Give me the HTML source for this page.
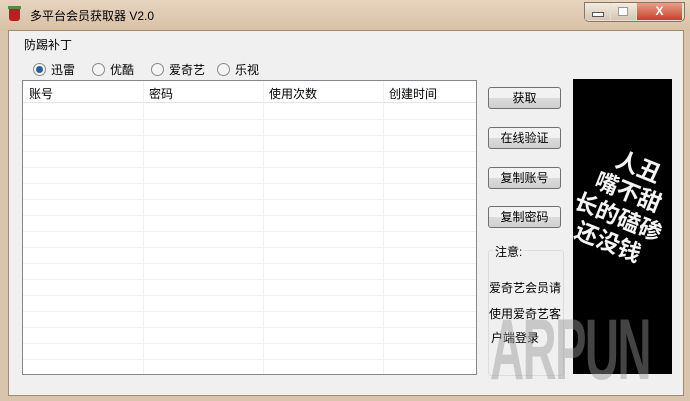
<!DOCTYPE html><html><head><style>
body{margin:0;width:690px;height:401px;overflow:hidden;background:#d9c4ad;font-family:"Liberation Sans","Noto Sans CJK SC",sans-serif;font-size:12px;color:#000;position:relative}
.a{position:absolute}
.title{left:0;top:0;width:690px;height:31px;background:linear-gradient(#e6d4c0,#d8c0a6)}
.client{left:8px;top:30px;width:674px;height:364px;background:#f0f0f0;border:1px solid #a08a72}
.btn{position:absolute;width:71px;height:20px;border:1px solid #707070;border-radius:3px;background:linear-gradient(#f2f2f2 50%,#dcdcdc 50%,#cfcfcf);text-align:center;line-height:20px;font-size:12px}
.rad{display:inline-block;width:11px;height:11px;border:1px solid #8a8a8a;border-radius:50%;background:#f4f4f4;vertical-align:-2px;margin-right:5px;position:relative}
.tbl{left:22px;top:80px;width:453px;height:293px;background:#fff;border:1px solid #828790}
.col{position:absolute;top:0;bottom:0;width:1px;background:#f0f0f0}
.row{position:absolute;left:0;right:0;height:1px;background:#f0f0f0}
</style></head><body>
<div class="a title"></div>
<div class="a" style="left:9px;top:8px;width:11px;height:13px;background:#b52020;border-radius:1px 1px 3px 3px"></div>
<div class="a" style="left:8px;top:6px;width:13px;height:3px;background:#5a8a40"></div>
<div class="a" style="left:30px;top:7px;font-size:12px">多平台会员获取器 V2.0</div>
<div class="a" style="left:584px;top:2px;width:99px;height:18px;border:1px solid #8a7660;border-radius:0 0 5px 5px;background:#e8ddd0"></div>
<div class="a" style="left:585px;top:3px;width:25px;height:17px;background:linear-gradient(#f2ebe2,#d6c6b2)"></div>
<div class="a" style="left:592px;top:12px;width:10px;height:3px;border:1px solid #555;background:#fff"></div>
<div class="a" style="left:611px;top:3px;width:25px;height:17px;background:linear-gradient(#f2ebe2,#d6c6b2)"></div>
<div class="a" style="left:618px;top:7px;width:8px;height:7px;border:1px solid #999;background:#fff"></div>
<div class="a" style="left:637px;top:3px;width:45px;height:17px;background:linear-gradient(#e8a08a,#c7402a);color:#fff;font-weight:bold;text-align:center;line-height:17px;font-size:12px">X</div>
<div class="a client"></div>
<div class="a" style="left:24px;top:36px">防踢补丁</div>
<div class="a" style="left:33px;top:61px"><span class="rad"><span class="a" style="left:2px;top:2px;width:7px;height:7px;border-radius:50%;background:#2a5d9a"></span></span>迅雷</div>
<div class="a" style="left:92px;top:61px"><span class="rad"></span>优酷</div>
<div class="a" style="left:151px;top:61px"><span class="rad"></span>爱奇艺</div>
<div class="a" style="left:217px;top:61px"><span class="rad"></span>乐视</div>
<div class="a tbl">
<div class="a" style="left:0;top:0;right:0;height:21px;border-bottom:1px solid #e5e5e5"></div>
<div class="col" style="left:120px"></div><div class="col" style="left:240px"></div><div class="col" style="left:360px"></div>
<div class="a" style="left:6px;top:4px">账号</div><div class="a" style="left:126px;top:4px">密码</div><div class="a" style="left:246px;top:4px">使用次数</div><div class="a" style="left:366px;top:4px">创建时间</div>
<div class="row" style="top:38px"></div><div class="row" style="top:54px"></div><div class="row" style="top:70px"></div><div class="row" style="top:86px"></div><div class="row" style="top:102px"></div><div class="row" style="top:118px"></div><div class="row" style="top:134px"></div><div class="row" style="top:150px"></div><div class="row" style="top:166px"></div><div class="row" style="top:182px"></div><div class="row" style="top:198px"></div><div class="row" style="top:214px"></div><div class="row" style="top:230px"></div><div class="row" style="top:246px"></div><div class="row" style="top:262px"></div><div class="row" style="top:278px"></div>
</div>
<div class="btn" style="left:488px;top:87px">获取</div>
<div class="btn" style="left:488px;top:127px">在线验证</div>
<div class="btn" style="left:488px;top:167px">复制账号</div>
<div class="btn" style="left:488px;top:206px">复制密码</div>
<div class="a" style="left:488px;top:250px;width:74px;height:124px;border:1px solid #dcdcdc;border-radius:3px"></div>
<div class="a" style="left:493px;top:243px;background:#f0f0f0;padding:0 2px">注意:</div>
<div class="a" style="left:489px;top:279px">爱奇艺会员请</div>
<div class="a" style="left:489px;top:305px">使用爱奇艺客</div>
<div class="a" style="left:491px;top:329px">户端登录</div>
<div class="a" style="left:573px;top:79px;width:99px;height:295px;background:#000;overflow:hidden">
<div class="a" style="left:-5px;top:72px;width:110px;color:#f4f4f4;font-size:23px;font-weight:bold;line-height:27px;text-align:center;transform:rotate(22deg);transform-origin:center">人丑<br>嘴不甜<br>长的磕碜<br>还没钱</div>
</div>
<div class="a" style="left:490px;top:305px;color:rgba(150,150,150,0.45);font-size:86px;font-weight:bold;line-height:90px;letter-spacing:-3px;transform:scaleX(0.55);transform-origin:left;font-family:'Liberation Sans',sans-serif">ARPUN</div>
</body></html>
